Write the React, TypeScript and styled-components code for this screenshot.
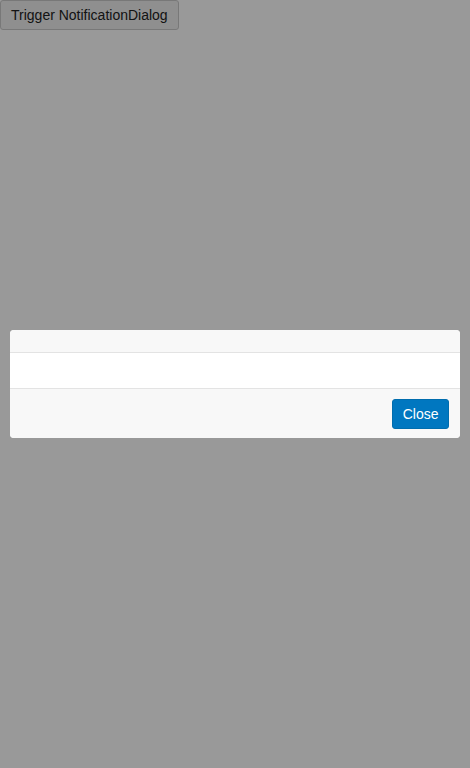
import React from 'react';
import styled, { createGlobalStyle } from 'styled-components';

const GlobalStyle = createGlobalStyle`
  html, body {
    margin: 0;
    padding: 0;
    background: #fff;
    font-family: "Liberation Sans", Arial, sans-serif;
  }
`;

const NotificationDialog = ({ onClose }: { onClose: () => void }) => {
  return (
    <Overlay>
      <Dialog role="dialog">
        <Header />
        <Body />
        <Footer>
          <CloseButton onClick={onClose}>Close</CloseButton>
        </Footer>
      </Dialog>
    </Overlay>
  );
};

const App = () => {
  const [open, setOpen] = React.useState(true);
  return (
    <>
      <GlobalStyle />
      <TriggerButton onClick={() => setOpen(true)}>Trigger NotificationDialog</TriggerButton>
      {open && <NotificationDialog onClose={() => setOpen(false)} />}
    </>
  );
};

const TriggerButton = styled.button`
  display: block;
  height: 30px;
  margin: 0;
  padding: 0 10px;
  font-family: "Liberation Sans", Arial, sans-serif;
  font-size: 14px;
  color: #222;
  background: #efefef;
  border: 1px solid #c8c8c8;
  border-radius: 3px;
  cursor: pointer;
`;

const Overlay = styled.div`
  position: fixed;
  inset: 0;
  background: rgba(0, 0, 0, 0.4);
  display: flex;
  align-items: center;
  justify-content: center;
  padding: 0 10px;
`;

const Dialog = styled.div`
  width: 100%;
  background: #fff;
  border-radius: 4px;
  overflow: hidden;
  display: flex;
  flex-direction: column;
`;

const Header = styled.div`
  height: 22px;
  background: #f8f8f8;
  border-bottom: 1px solid #e3e3e3;
`;

const Body = styled.div`
  height: 35px;
  background: #fff;
  border-bottom: 1px solid #e3e3e3;
`;

const Footer = styled.div`
  display: flex;
  justify-content: flex-end;
  align-items: flex-start;
  padding: 10px 11px 9px;
  background: #f8f8f8;
`;

const CloseButton = styled.button`
  height: 30px;
  padding: 0 9.5px;
  font-family: "Liberation Sans", Arial, sans-serif;
  font-size: 14px;
  color: #fff;
  background: #0077c0;
  border: 1px solid #006dae;
  border-radius: 3px;
  cursor: pointer;
`;

export default App;
